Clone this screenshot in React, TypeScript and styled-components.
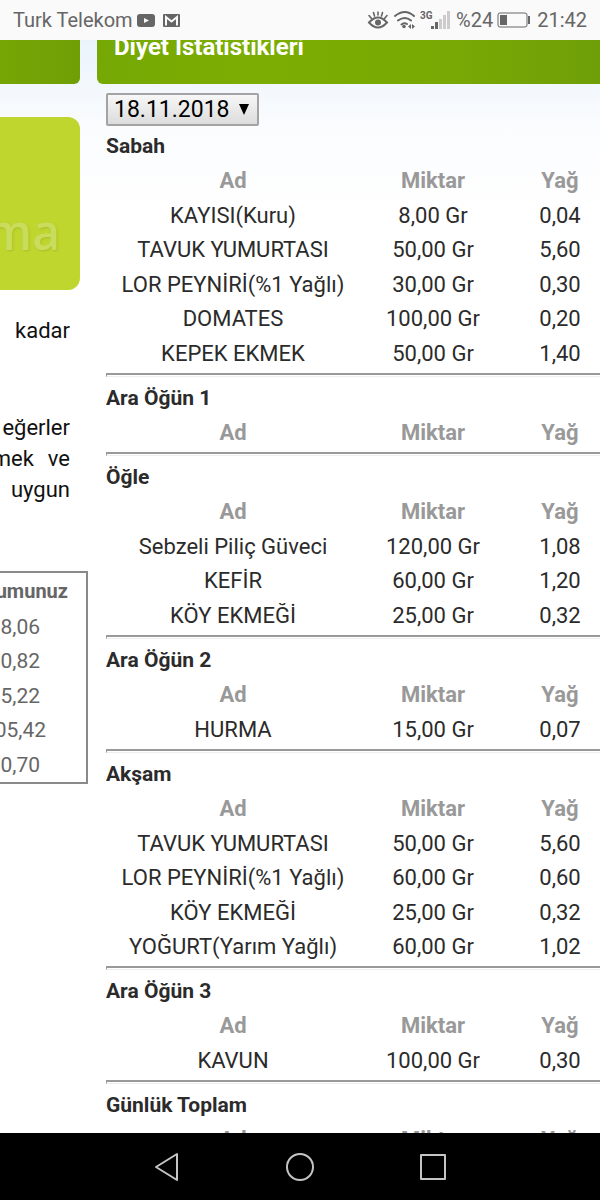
import React from "react";
import styled, { createGlobalStyle } from "styled-components";

const GlobalStyle = createGlobalStyle`
  *, *::before, *::after { box-sizing: border-box; }
  body { margin: 0; font-family: Roboto, "Liberation Sans", sans-serif; }
`;

const Screen = styled.div`
  display: flex;
  flex-direction: column;
  height: 100vh;
  overflow: hidden;
  background: #fff;
`;

const StatusBar = styled.header`
  display: flex;
  flex: none;
  align-items: center;
  justify-content: space-between;
  height: 40px;
  padding: 0 13px;
  background: #fafafa;
  color: #666;
  font-size: 20px;
  line-height: 24px;
`;

const StatusGroup = styled.div`
  display: flex;
  align-items: center;
  gap: 4px;
`;

const WebView = styled.div`
  display: flex;
  flex: 1;
  min-height: 0;
  gap: 9px;
  overflow: hidden;
  background: linear-gradient(#eaf3fb, #fbfcfe 90px, #fff 180px);
`;

const Sidebar = styled.aside`
  display: flex;
  flex: none;
  flex-direction: column;
  width: 88px;
  overflow: hidden;
`;

const SidebarTab = styled.div`
  flex: none;
  height: 44px;
  margin-right: 8px;
  border-bottom-right-radius: 6px;
  background: linear-gradient(90deg, #76a604, #6f9f05);
`;

const PromoCard = styled.div`
  display: flex;
  flex: none;
  align-items: center;
  justify-content: flex-end;
  height: 173px;
  margin: 33px 8px 0 0;
  padding: 56px 20px 0 0;
  border-radius: 0 12px 12px 0;
  background: #bed62e;
  color: #cadc5c;
  font-family: "Open Sans", "Noto Sans", sans-serif;
  font-size: 48px;
  font-weight: 600;
  line-height: 56px;
  text-shadow: 1px 1px 2px #a9bf2c;
`;

const SideText = styled.p<{ $gap: number }>`
  display: flex;
  flex: none;
  justify-content: flex-end;
  gap: 14px;
  margin: ${(p) => p.$gap}px 18px 0 0;
  color: #111;
  font-size: 22px;
  line-height: 31px;
  white-space: nowrap;
`;

const SideTable = styled.table`
  flex: none;
  width: 100%;
  margin-top: 66px;
  table-layout: fixed;
  border: 2px solid #8a8a8a;
  border-left: 0;
  border-spacing: 0;
  color: #666;
  font-size: 21px;
  line-height: 34px;
  text-align: right;

  tbody tr:nth-child(odd) { height: 35px; }
`;

const SideHead = styled.th`
  height: 36px;
  padding: 0 18px 0 0;
  font-size: 20px;
  text-align: right;
  direction: rtl;
`;

const SideCell = styled.td<{ $wide?: boolean }>`
  padding: 0 ${(p) => (p.$wide ? 40 : 46)}px 0 0;
  direction: rtl;
  white-space: nowrap;
`;

const Main = styled.main`
  flex: 1;
  min-width: 0;
`;

const TitleBar = styled.h1`
  height: 44px;
  margin: 0;
  padding: 0 17px;
  overflow: hidden;
  border-bottom-left-radius: 6px;
  background: linear-gradient(90deg, #76a805, #7bad02 30%, #78a904 70%, #6f9f07);
  color: #fff;
  font-size: 24px;
  line-height: 14px;
`;

const Content = styled.div`
  padding: 9px 0 0 9px;
`;

const DateSelect = styled.select`
  display: block;
  height: 33px;
  width: 153px;
  padding: 0 6px;
  appearance: none;
  border: 2px solid #a3a3a3;
  border-radius: 2px;
  background: linear-gradient(#f7f7f7, #dcdcdc);
  color: #000;
  font-family: inherit;
  font-size: 23px;
`;

const DateField = styled.label`
  display: grid;
  width: 153px;
  margin-bottom: 3px;
  align-items: center;

  > * { grid-area: 1 / 1; }
  > svg { justify-self: end; margin-right: 10px; pointer-events: none; }
`;

const MealTitle = styled.h2`
  margin: 0;
  color: #2b2b2b;
  font-size: 21px;
  line-height: 35px;
`;

const MealTable = styled.table`
  width: 100%;
  table-layout: fixed;
  border-collapse: collapse;
  color: #2b2b2b;
  font-size: 22px;
  line-height: 34px;
  text-align: center;
  white-space: nowrap;

  tbody tr:nth-child(odd) { height: 35px; }
`;

const HeadCell = styled.th<{ $width?: string }>`
  width: ${(p) => p.$width ?? "auto"};
  padding: 0;
  color: #999;

  &:last-child { padding-left: 14px; }
`;

const Cell = styled.td`
  padding: 0;

  &:last-child { padding-left: 14px; }
`;

const Divider = styled.hr`
  height: 4px;
  margin: 2px 0 4px;
  border: 0 solid #999;
  border-width: 2px 0 0 1px;
  border-bottom: 1px solid #eee;
`;

const NavBar = styled.nav`
  display: flex;
  flex: none;
  align-items: center;
  justify-content: center;
  gap: 101px;
  height: 67px;
  background: #000;
`;

const NavButton = styled.button`
  display: flex;
  padding: 0;
  border: 0;
  background: none;
  color: #c4c4c4;
`;

type Food = [string, string, string];

const meals: { title: string; foods: Food[] }[] = [
  {
    title: "Sabah",
    foods: [
      ["KAYISI(Kuru)", "8,00 Gr", "0,04"],
      ["TAVUK YUMURTASI", "50,00 Gr", "5,60"],
      ["LOR PEYNİRİ(%1 Yağlı)", "30,00 Gr", "0,30"],
      ["DOMATES", "100,00 Gr", "0,20"],
      ["KEPEK EKMEK", "50,00 Gr", "1,40"],
    ],
  },
  { title: "Ara Öğün 1", foods: [] },
  {
    title: "Öğle",
    foods: [
      ["Sebzeli Piliç Güveci", "120,00 Gr", "1,08"],
      ["KEFİR", "60,00 Gr", "1,20"],
      ["KÖY EKMEĞİ", "25,00 Gr", "0,32"],
    ],
  },
  { title: "Ara Öğün 2", foods: [["HURMA", "15,00 Gr", "0,07"]] },
  {
    title: "Akşam",
    foods: [
      ["TAVUK YUMURTASI", "50,00 Gr", "5,60"],
      ["LOR PEYNİRİ(%1 Yağlı)", "60,00 Gr", "0,60"],
      ["KÖY EKMEĞİ", "25,00 Gr", "0,32"],
      ["YOĞURT(Yarım Yağlı)", "60,00 Gr", "1,02"],
    ],
  },
  { title: "Ara Öğün 3", foods: [["KAVUN", "100,00 Gr", "0,30"]] },
  { title: "Günlük Toplam", foods: [] },
];

const sideValues = ["8,06", "0,82", "5,22", "05,42", "0,70"];

function Meal({ title, foods }: { title: string; foods: Food[] }) {
  return (
    <section>
      <MealTitle>{title}</MealTitle>
      <MealTable>
        <thead>
          <tr>
            <HeadCell $width="254px">Ad</HeadCell>
            <HeadCell $width="146px">Miktar</HeadCell>
            <HeadCell>Yağ</HeadCell>
          </tr>
        </thead>
        <tbody>
          {foods.map((food) => (
            <tr key={food[0]}>
              {food.map((text, i) => (
                <Cell key={i}>{text}</Cell>
              ))}
            </tr>
          ))}
        </tbody>
      </MealTable>
      <Divider />
    </section>
  );
}

export default function App() {
  return (
    <Screen>
      <GlobalStyle />
      <StatusBar>
        <StatusGroup>
          <span>Turk Telekom</span>
          <svg width="18" height="14" viewBox="0 0 18 14" aria-hidden="true">
            <rect y="1" width="18" height="13" rx="3" fill="#666" />
            <path d="M7 5v5l5-2.500z" fill="#fafafa" />
          </svg>
          <svg width="24" height="14" viewBox="0 0 24 14" aria-hidden="true">
            <rect x="4" y="1" width="17" height="13" rx="1" fill="#666" />
            <path d="M7 12.500V4l5.500 4.500L18 4v8.500" fill="none" stroke="#fafafa" strokeWidth="2" />
          </svg>
        </StatusGroup>
        <StatusGroup>
          <svg width="85" height="24" viewBox="369 8 85 24" aria-hidden="true">
            <g fill="none" stroke="#666" strokeLinecap="round">
              <path strokeWidth="2" d="M371 22.500q9-10 18 0q-9 10-18 0z" />
              <path strokeWidth="1.600" d="M371 15.500l2.500 3M389 15.500l-2.500 3M375.500 12.500l1 3.500M384.500 12.500l-1 3.500M380 12v3" />
              <path strokeWidth="2" d="M397 16q10-8 19 0M400 20.500q7-5 13 0M403.500 24.500q3-2 5.500-.5" />
            </g>
            <circle cx="380" cy="22.500" r="3" fill="#666" />
            <circle cx="406" cy="26.500" r="1.800" fill="#666" />
            <path d="M413 24v5l-3-2.500zM414 24v5l3-2.500z" fill="#666" />
            <text x="422" y="19" fontSize="10" fontWeight="700" fill="#666">3G</text>
            <path d="M433 26h3v3h-3zM437 22h3v7h-3z" fill="#666" />
            <path d="M441 19h3v10h-3zM445 15h3v14h-3zM449 11h3v18h-3z" fill="#ccc" />
          </svg>
          <span>%24</span>
          <svg width="36" height="16" viewBox="0 0 36 16" aria-hidden="true">
            <rect x="1" y="1" width="29" height="14" rx="2" fill="none" stroke="#666" />
            <path d="M3 3h7v10H3zM31 4h2v8h-2z" fill="#666" />
          </svg>
          <span>21:42</span>
        </StatusGroup>
      </StatusBar>

      <WebView>
        <Sidebar>
          <SidebarTab />
          <PromoCard>ma</PromoCard>
          <SideText $gap={25}>kadar</SideText>
          <SideText $gap={66}>eğerler</SideText>
          <SideText $gap={0}>
            <span>mek</span>
            <span>ve</span>
          </SideText>
          <SideText $gap={0}>uygun</SideText>
          <SideTable>
            <thead>
              <tr>
                <SideHead>umunuz</SideHead>
              </tr>
            </thead>
            <tbody>
              {sideValues.map((value) => (
                <tr key={value}>
                  <SideCell $wide={value.length > 4}>{value}</SideCell>
                </tr>
              ))}
            </tbody>
          </SideTable>
        </Sidebar>

        <Main>
          <TitleBar>Diyet İstatistikleri</TitleBar>
          <Content>
            <DateField>
              <DateSelect aria-label="Tarih" defaultValue="18.11.2018">
                <option>18.11.2018</option>
              </DateSelect>
              <svg width="10" height="11" viewBox="0 0 10 11" aria-hidden="true">
                <path d="M0 0h10L5 11z" fill="#000" />
              </svg>
            </DateField>
            {meals.map((meal) => (
              <Meal key={meal.title} {...meal} />
            ))}
          </Content>
        </Main>
      </WebView>

      <NavBar>
        <NavButton aria-label="Geri">
          <svg width="32" height="32" viewBox="0 0 32 32" fill="none" stroke="currentColor" strokeWidth="2" strokeLinejoin="round">
            <path d="M26 3v26L5 16z" />
          </svg>
        </NavButton>
        <NavButton aria-label="Ana ekran">
          <svg width="32" height="32" viewBox="0 0 32 32" fill="none" stroke="currentColor" strokeWidth="2">
            <circle cx="16" cy="16" r="13" />
          </svg>
        </NavButton>
        <NavButton aria-label="Son uygulamalar">
          <svg width="32" height="32" viewBox="0 0 32 32" fill="none" stroke="currentColor" strokeWidth="2" strokeLinejoin="round">
            <path d="M4 4h24v24H4z" />
          </svg>
        </NavButton>
      </NavBar>
    </Screen>
  );
}
